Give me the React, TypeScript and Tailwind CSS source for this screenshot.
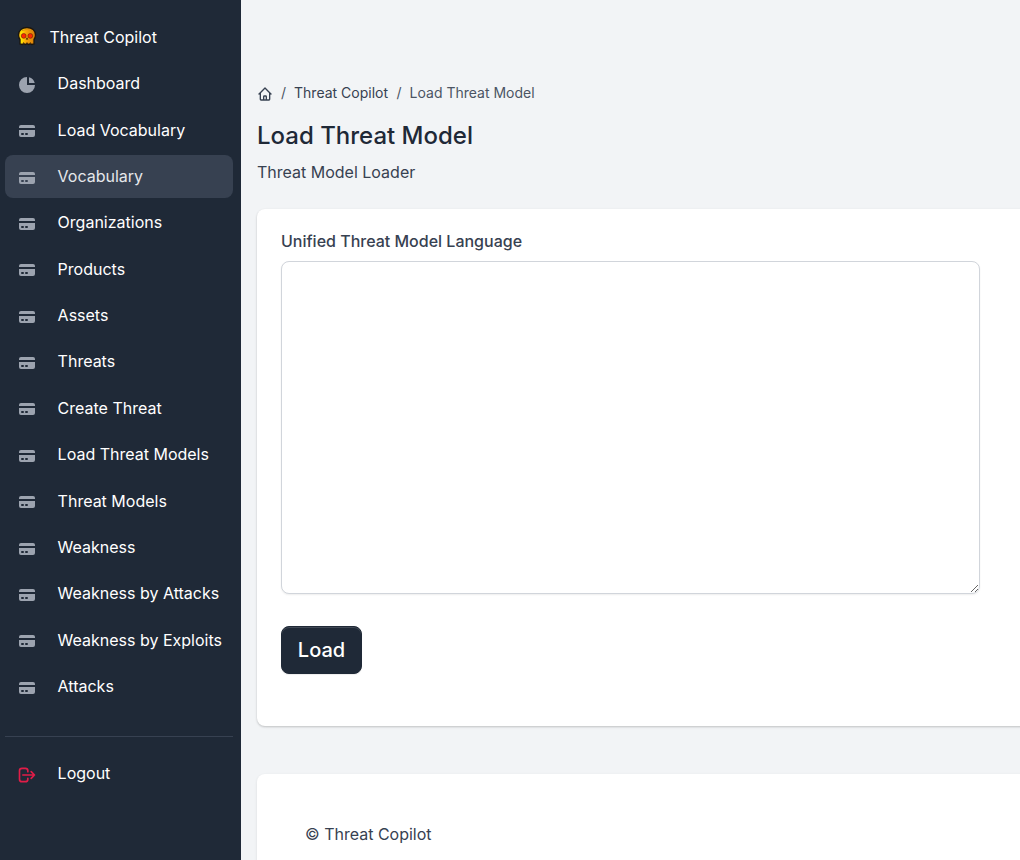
import React from "react";

const items = [
  "Dashboard",
  "Load Vocabulary",
  "Vocabulary",
  "Organizations",
  "Products",
  "Assets",
  "Threats",
  "Create Threat",
  "Load Threat Models",
  "Threat Models",
  "Weakness",
  "Weakness by Attacks",
  "Weakness by Exploits",
  "Attacks",
];

function PieIcon() {
  return (
    <svg className="block h-5 w-5 text-[#9ca3af]" viewBox="0 0 20 20" fill="currentColor">
      <path d="M2 10a8 8 0 018-8v8h8a8 8 0 11-16 0z" />
      <path d="M12 2.252A8.014 8.014 0 0117.748 8H12V2.252z" />
    </svg>
  );
}

function CardIcon() {
  return (
    <svg className="block h-5 w-5 text-[#9ca3af]" viewBox="0 0 20 20" fill="currentColor">
      <path d="M4 4a2 2 0 00-2 2v1h16V6a2 2 0 00-2-2H4z" />
      <path
        fillRule="evenodd"
        clipRule="evenodd"
        d="M18 9H2v5a2 2 0 002 2h12a2 2 0 002-2V9zM4 13a1 1 0 011-1h1a1 1 0 110 2H5a1 1 0 01-1-1zm5-1a1 1 0 100 2h1a1 1 0 100-2H9z"
      />
    </svg>
  );
}

function LogoutIcon() {
  return (
    <svg className="block h-5 w-5 text-[#e11d48]" viewBox="0 0 24 24" fill="none" stroke="currentColor" strokeWidth="2" strokeLinecap="round" strokeLinejoin="round">
      <path d="M17 16l4-4m0 0l-4-4m4 4H7m6 4v1a3 3 0 01-3 3H6a3 3 0 01-3-3V7a3 3 0 013-3h4a3 3 0 013 3v1" />
    </svg>
  );
}

function HomeIcon() {
  return (
    <svg className="block h-4 w-4" viewBox="0 0 24 24" fill="none" stroke="currentColor" strokeWidth="2" strokeLinecap="round" strokeLinejoin="round">
      <path d="M3 12l2-2m0 0l7-7 7 7M5 10v10a1 1 0 001 1h3m10-11l2 2m-2-2v10a1 1 0 01-1 1h-3m-6 0a1 1 0 001-1v-4a1 1 0 011-1h2a1 1 0 011 1v4a1 1 0 001 1m-6 0h6" />
    </svg>
  );
}

function SkullLogo() {
  return (
    <svg className="mb-px block h-5 w-5" viewBox="0 0 20 20">
      <defs>
        <linearGradient id="gold" x1="0" x2="1" y1="0" y2="0">
          <stop offset="0" stopColor="#f5a50c" />
          <stop offset="0.15" stopColor="#ffe800" />
          <stop offset="0.45" stopColor="#f9a308" />
          <stop offset="1" stopColor="#d47b0a" />
        </linearGradient>
      </defs>
      <path
        d="M10 1.5C5 1.5 1.5 4.5 1.5 9c0 2 .6 3.3 1.5 4.5v4.5l2.2.5 1.4-.9 1.7.9 1.7-.9 1.7.9 1.7-.9 1.4.9 2.2-.5v-4.5c.9-1.2 1.5-2.5 1.5-4.5 0-4.5-3.5-7.5-8.5-7.5z"
        fill="url(#gold)"
        stroke="#1b160f"
        strokeWidth="1.3"
      />
      <path d="M4.5 4.8Q10 1.8 15.5 4.8" fill="none" stroke="#d88a12" strokeWidth="0.8" />
      <circle cx="6.7" cy="9.9" r="2.4" fill="#ff2800" stroke="#65200c" strokeWidth="0.6" />
      <circle cx="13.3" cy="9.9" r="2.4" fill="#ff2800" stroke="#65200c" strokeWidth="0.6" />
      <path d="M10 11.3l-1.3 2.2h2.6z" fill="#35200a" />
      <path d="M6.6 16V18M10 16V18M13.4 16V18" stroke="#6d3e08" strokeWidth="0.7" />
    </svg>
  );
}

export default function App() {
  return (
    <div className="flex h-[860px] w-[1020px] overflow-hidden bg-[#f2f4f6] font-['Inter',sans-serif] text-base text-[#374151]">
      <nav className="h-full w-[241px] shrink-0 bg-[#1f2937] px-[5px] pt-4 text-white">
        <div className="flex h-[42px] items-center pb-px pl-3">
          <SkullLogo />
          <span className="ml-[12.5px]">Threat Copilot</span>
        </div>
        <ul className="mt-[3.79px] flex flex-col gap-[3.2px]">
          {items.map((label, i) => (
            <li
              key={label}
              className={
                "flex h-[43.18px] w-[228px] items-center rounded-lg pl-3 " +
                (label === "Vocabulary" ? "bg-[#374151] text-[#e5e7eb]" : "text-white")
              }
            >
              <span className="mt-[3.1px]">{i === 0 ? <PieIcon /> : <CardIcon />}</span>
              <span className="mb-[0.12px] ml-[20.6px] whitespace-nowrap">{label}</span>
            </li>
          ))}
        </ul>
        <div className="mt-[28.4px] w-[228px] border-t border-[#374151]" />
        <div className="mt-[15px] flex h-[43px] items-center pl-3">
          <span className="mt-[3px]">
            <LogoutIcon />
          </span>
          <span className="mb-[2px] ml-[20.6px]">Logout</span>
        </div>
      </nav>

      <main className="flex min-w-0 grow flex-col pl-4 pt-[83px]">
        <div className="flex h-[21px] items-center text-sm">
          <span className="mt-px">
            <HomeIcon />
          </span>
          <span className="ml-2 text-[#4b5563]">/</span>
          <span className="ml-2">Threat Copilot</span>
          <span className="ml-[8.5px] text-[#4b5563]">/</span>
          <span className="ml-2 text-[#4b5563]">Load Threat Model</span>
        </div>
        <h1 className="mt-[17px] text-2xl font-medium text-[#1f2937]">Load Threat Model</h1>
        <p className="mt-2">Threat Model Loader</p>

        <section className="mt-[25px] flex h-[517px] w-[860px] shrink-0 flex-col items-start rounded-lg bg-white pl-6 pt-5 shadow-[0_1px_3px_rgba(0,0,0,0.1),0_1px_2px_rgba(0,0,0,0.12)]">
          <label htmlFor="model" className="font-medium">
            Unified Threat Model Language
          </label>
          <textarea
            id="model"
            className="mt-2 block h-[333px] w-[699px] shrink-0 resize rounded-lg border border-[#d1d5db] bg-white shadow-[0_1px_2px_rgba(0,0,0,0.07)] outline-none"
          />
          <button className="mt-8 h-12 w-[81px] shrink-0 rounded-lg border border-[#1f2937] bg-[#1f2937] text-xl font-medium text-white shadow-[inset_0_1px_0_rgba(255,255,255,0.15),0_1px_1px_rgba(0,0,0,0.075)]">
            Load
          </button>
        </section>

        <footer className="mt-12 h-[140px] w-[860px] shrink-0 rounded-lg bg-white pl-12 pt-12 shadow-[0_1px_3px_rgba(0,0,0,0.1)]">
          © Threat Copilot
        </footer>
      </main>
    </div>
  );
}
